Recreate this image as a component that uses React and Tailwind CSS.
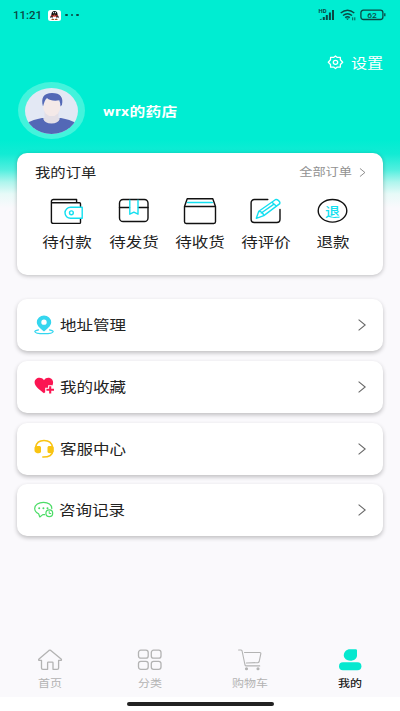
import React, { useState } from 'react';

const orders = [
  { key: 'pay', label: '待付款' },
  { key: 'ship', label: '待发货' },
  { key: 'receive', label: '待收货' },
  { key: 'review', label: '待评价' },
  { key: 'refund', label: '退款' }
];

const menus = [
  { key: 'address', label: '地址管理' },
  { key: 'favorite', label: '我的收藏' },
  { key: 'service', label: '客服中心' },
  { key: 'records', label: '咨询记录' }
];

const tabs = [
  { key: 'home', label: '首页' },
  { key: 'category', label: '分类' },
  { key: 'cart', label: '购物车' },
  { key: 'mine', label: '我的' }
];

const OrderIcon = ({ name }) => (
  <svg className="w-[34px] h-[28px]" viewBox="0 0 34 28" fill="none" stroke="#111" strokeWidth="1.4" strokeLinecap="round" strokeLinejoin="round">
    {name === 'pay' && (
      <>
        <path d="M30.5 9.5V6.8a1 1 0 0 0-1-1H1.4V4.500a2 2 0 0 1 2-2h23.2v3.300M1.400 4.500v19.900a2 2 0 0 0 2 2h26.1a1 1 0 0 0 1-1V22" />
        <path d="M32.2 10.3v11H20.5a5.500 5.500 0 0 1 0-11z" stroke="#12dff0" />
        <circle cx="21.400" cy="15.800" r="1.900" stroke="#12dff0" />
      </>
    )}
    {name === 'ship' && (
      <>
        <rect x="2.500" y="2.500" width="28.500" height="22" rx="3.600" />
        <path d="M2.500 10.500h10M21.400 10.500H31" />
        <path d="M12.800 3.200v14l4.100-2.100 4.100 2.100v-14" stroke="#12dff0" />
      </>
    )}
    {name === 'receive' && (
      <>
        <path d="M1.500 9.500h31v15.300a1.700 1.700 0 0 1-1.700 1.700H3.200a1.700 1.700 0 0 1-1.700-1.700zL4.200 1.800h25.600l2.700 7.700" />
        <path d="M4.600 5.500h24.600" stroke="#12dff0" strokeWidth="1.600" />
      </>
    )}
    {name === 'review' && (
      <>
        <path d="M18.800 2.500H5.300a3.200 3.200 0 0 0-3.200 3.200v16.600a3.200 3.200 0 0 0 3.200 3.200h22.500a3.200 3.200 0 0 0 3.200-3.200V12.500" />
        <path d="M7.300 21.300l2.500-7L26.300 2.700c1.800-.9 5.500 2 4.500 3.900L14.800 18.600zM9.800 14.300c2.500.2 4.300 1.800 5 4.300M23 5.200l4.500 4M12.300 16l12.300-8.600" stroke="#12dff0" />
      </>
    )}
    {name === 'refund' && (
      <>
        <ellipse cx="16.500" cy="13.800" rx="14.300" ry="11.300" />
        <text x="9" y="18.600" fontSize="13" fontWeight="500" fill="#12dff0" stroke="none" textLength="15" lengthAdjust="spacingAndGlyphs">退</text>
      </>
    )}
  </svg>
);

const MenuIcon = ({ name }) => (
  <svg className="w-[20px] h-[20px] shrink-0" viewBox="0 0 20 20" fill="none" strokeLinecap="round" strokeLinejoin="round">
    {name === 'address' && (
      <>
        <path fillRule="evenodd" fill="#34d6ef" d="M10 .4a7.200 6.800 0 0 1 7.200 6.800c0 3.900-4.900 7.300-7.200 9.300-2.300-2-7.200-5.400-7.200-9.300A7.200 6.800 0 0 1 10 .4zm0 4.200a2.700 2.600 0 1 0 0 5.200 2.700 2.600 0 1 0 0-5.200z" />
        <path stroke="#34d6ef" strokeWidth="1.200" d="M4.500 14.800c-2.200.5-3.800 1-3.700 1.800.3 1.300 4.600 2.100 9.200 2.100s8.900-.8 9.200-2.100c.1-.8-1.500-1.300-3.700-1.800" />
      </>
    )}
    {name === 'favorite' && (
      <>
        <path fill="#fb1552" d="M10 3.200C11.200 1.500 12.600.8 14.200.8c3 0 4.900 2.200 4.900 4.700 0 1.200-.3 2.200-.9 3.200l-.6.800L10 16.200C6.800 13.700.6 9.600.6 5.500.6 2.900 2.700.8 5.500.8c1.700 0 3.300.7 4.500 2.400z" />
        <path stroke="#fff" strokeWidth="4.200" strokeLinecap="butt" d="M16.200 8.200v9.300M11.200 12.800h9" />
        <path stroke="#fb1552" strokeWidth="2.100" strokeLinecap="butt" d="M16.200 9.300v7.200M12.400 12.800h7.600" />
      </>
    )}
    {name === 'service' && (
      <>
        <path stroke="#f9c412" strokeWidth="1.500" d="M1.600 8.200C2.300 4 5.500 1.500 10 1.500s7.900 2.500 8.600 6.700M18.800 12.300c-.4 3.800-3.400 5.700-10 5.600" />
        <path fill="#f9c412" d="M.5 8.400C1.300 7.300 3 6.900 5 7c1.400 0 2 .6 2 1.500v4.300c0 .9-.8 1.400-2.300 1.400-2.400 0-4.200-.9-4.200-2.800zM19.800 8.400c-.8-1.100-2.300-1.500-4.300-1.400-1.400 0-2 .6-2 1.500v4.300c0 .9.800 1.400 2.300 1.400 2.400 0 4-.9 4-2.800z" />
      </>
    )}
    {name === 'records' && (
      <>
        <path stroke="#4bdc66" strokeWidth="1.200" d="M17.800 8.600c.1-4-3.500-6.300-8.300-6.300C4.700 2.300.7 4.600.7 8.600c0 2.200 1.500 4.100 3.900 5.200l1.200 3.200 3-2.400 1.800.1" />
        <circle cx="15.300" cy="13.200" r="3.400" stroke="#4bdc66" strokeWidth="1.200" />
        <path stroke="#4bdc66" strokeWidth="1" d="M15.200 11.500v2h1.600" />
        <path stroke="#4bdc66" strokeWidth="2" d="M5.200 8.300h.01M9.400 8.300h.01M13.500 8.300h.01" />
      </>
    )}
  </svg>
);

const TabIcon = ({ name }) => (
  <svg className="w-[26px] h-[22px]" viewBox="0 0 26 22" fill="none" stroke="#b3b3b3" strokeWidth="1.300" strokeLinecap="round" strokeLinejoin="round">
    {name === 'home' && (
      <path d="M12 1.400q.9-.6 1.800 0l10.300 8.500c.7.700.4 1.500-.5 1.500h-2v7.500c0 .9-.6 1.400-1.400 1.400h-4.200v-6.500q0-.7-.7-.7h-4q-.7 0-.7.7v6.500H5.900c-.9 0-1.400-.5-1.400-1.400v-7.500h-2c-.9 0-1.200-.8-.5-1.500z" />
    )}
    {name === 'category' && (
      <>
        <rect x="1.500" y="1.200" width="9.700" height="8" rx="2.300" />
        <rect x="14.300" y="1.200" width="9.700" height="8" rx="2.300" />
        <rect x="1.500" y="12.300" width="9.700" height="8" rx="2.300" />
        <rect x="14.300" y="12.300" width="9.700" height="8" rx="2.300" />
      </>
    )}
    {name === 'cart' && (
      <>
        <path strokeWidth="1.100" d="M1.600 1h2.100c.7 0 1.200.3 1.400 1L8 16c.2.600.6.900 1.200.9h13.500M7.500 3.500h15.200c.9 0 1.300.5 1.100 1.300l-1.600 7.700c-.2.700-.6 1-1.300 1.100l-11.600.4" />
        <circle cx="9.500" cy="19.800" r=".9" fill="#b3b3b3" />
        <circle cx="21" cy="19.800" r=".9" fill="#b3b3b3" />
      </>
    )}
    {name === 'mine' && (
      <g fill="#06e8cf" stroke="none">
        <path d="M13 .3h5.800a1.200 1.200 0 0 1 1.200 1.200v4.700c0 3.300-3 5.500-6.700 5.500-3.500 0-6.500-2.200-6.500-5.400C6.800 3 9.500.3 13 .3z" />
        <rect x="2" y="13.200" width="22.400" height="8" rx="4" />
      </g>
    )}
  </svg>
);

const Arrow = ({ className, color }) => (
  <svg className={className} viewBox="0 0 8 12" fill="none" stroke={color} strokeWidth="1.100">
    <path d="M.6.6L7.200 6 .6 11.400" />
  </svg>
);

const StatusBar = () => (
  <div className="h-[30px] pl-[13px] pr-[14px] flex items-center justify-between text-[#0a4844]">
    <div className="flex items-center">
      <span className="inline-block w-[29px] text-[11px] leading-none font-medium origin-left scale-x-[1.04]">11:21</span>
      <svg className="ml-[6px] w-[13px] h-[11px]" viewBox="0 0 13 11">
        <rect width="13" height="11" rx="2.500" fill="#fff" />
        <ellipse cx="6.500" cy="5" rx="3.100" ry="4" fill="#111" />
        <path d="M3.400 4.500L1.900 7.800l2-.5zM9.600 4.500l1.500 3.300-2-.5z" fill="#111" />
        <ellipse cx="6.500" cy="7.300" rx="1.900" ry="1.900" fill="#fff" />
        <path d="M3.400 5q3.100 1.300 6.200 0v1.100q-3.100 1.300-6.200 0z" fill="#ed2b20" />
        <path d="M5.200 3.900h2.600L6.500 4.800zM3.500 9.100h2.600v.8H3.500zM6.900 9.100h2.600v.8H6.900z" fill="#a5551d" />
        <circle cx="5.600" cy="2.700" r=".6" fill="#fff" />
        <circle cx="7.400" cy="2.700" r=".6" fill="#fff" />
      </svg>
      <div className="ml-[4px] flex gap-[3px]">
        <i className="w-[2.500px] h-[2.500px] rounded-full bg-[#0a4844]" />
        <i className="w-[2.500px] h-[2.500px] rounded-full bg-[#0a4844]" />
        <i className="w-[2.500px] h-[2.500px] rounded-full bg-[#0a4844]" />
      </div>
    </div>
    <div className="flex items-center">
      <svg className="w-[17px] h-[12px]" viewBox="0 0 17 12" fill="currentColor">
        <text x=".6" y="4.400" fontSize="5.500" fontWeight="700" textLength="8" lengthAdjust="spacingAndGlyphs">HD</text>
        <path d="M1.500 11l2-1.600V11zM4.800 8h2v3h-2zM7.800 6h2v5h-2zM10.900 3.500h2V11h-2zM14 1h2v10h-2z" />
      </svg>
      <svg className="ml-[5px] w-[16px] h-[12px]" viewBox="0 0 16 12" fill="none" stroke="currentColor" strokeWidth="1.500">
        <path d="M.7 4q6.800-5.400 13.600 0M3 6.500q4.500-3.600 9 0M5.200 8.700q2.300-1.900 4.600 0" />
        <path d="M6 9.400h3L7.500 11z" fill="currentColor" stroke="none" />
        <path d="M12.700 8.300v3M14.800 8.300v3" strokeWidth=".9" />
      </svg>
      <svg className="ml-[4px] w-[26px] h-[12px]" viewBox="0 0 26 12" fill="none" stroke="currentColor">
        <rect x=".9" y="1.200" width="22" height="9.300" rx="2.500" strokeWidth="1.300" />
        <path d="M24.800 4.200v3" strokeWidth="1.300" />
        <text x="7.200" y="8.700" fontSize="8" fontWeight="500" fill="currentColor" stroke="none" textLength="9.500" lengthAdjust="spacingAndGlyphs">62</text>
      </svg>
    </div>
  </div>
);

const Avatar = () => (
  <div className="w-[67px] h-[57px] rounded-[50%] bg-[#43f3dc] flex items-center justify-center">
    <svg className="w-[53px] h-[46px]" viewBox="0 0 53 46">
      <defs>
        <clipPath id="face">
          <ellipse cx="26.500" cy="23" rx="26.500" ry="23" />
        </clipPath>
      </defs>
      <g clipPath="url(#face)">
        <rect width="53" height="46" fill="#e3e8f4" />
        <path d="M2 35q6-3.500 15-5h19q9 1.500 15 5v12H2z" fill="#5368b6" />
        <path d="M19.500 23h14v7l1.500.4q-1.800 5-8.500 5t-8.500-5l1.500-.4z" fill="#e3dfe6" />
        <ellipse cx="26.800" cy="18.800" rx="8.600" ry="9.300" fill="#f4e9e8" />
        <path d="M18 18.500C15.700 10 18.600 5 27 5c8.500 0 11.700 4.500 9.900 12l-1.400 1.500q-.2-4-1.200-6.200c-4.300.9-10 .3-12.300-2.300-2.200 2-2.800 4.500-4 8.500z" fill="#5368b6" />
      </g>
    </svg>
  </div>
);

const App = () => {
  const [active, setActive] = useState('mine');

  return (
    <div className="w-[400px] h-[711px] overflow-hidden flex flex-col bg-[#faf9fc] bg-[linear-gradient(to_bottom,#00edd2_0px,#00edd2_140px,#12ebd4_154px,#53efdf_170px,#aef5ed_182px,#e7faf8_194px,#faf9fc_208px)] bg-no-repeat text-[#222] font-['Roboto','Noto_Sans_CJK_SC',sans-serif]">
      <StatusBar />

      <header className="h-[123px] shrink-0 text-white">
        <div className="h-[52px] pt-[23px] pl-[327px] flex items-start">
          <svg className="w-[17px] h-[15px] mt-[2px]" viewBox="0 0 17 15" fill="none" stroke="#fff" strokeWidth="1.300" strokeLinejoin="round">
            <path d="M8.500 1l1.800 1.400 3-.1.100 2.500 2.300 2.400-2.300 2.300-.1 2.700-3-.1-1.800 1.500-1.900-1.500-3 .1-.1-2.700-2.200-2.300 2.200-2.400.1-2.500 3 .1z" />
            <ellipse cx="8.500" cy="7.300" rx="2.200" ry="2" />
          </svg>
          <span className="ml-[7px] text-[14px] leading-[20px] origin-left scale-x-[1.15] whitespace-nowrap">设置</span>
        </div>
        <div className="pl-[18px] flex items-center">
          <Avatar />
          <span className="ml-[18px] mt-[2px] text-[13px] leading-[20px] font-bold tracking-[0.300px] origin-left scale-x-[1.21] whitespace-nowrap">wrx的药店</span>
        </div>
      </header>

      <section className="mx-[17px] h-[122px] shrink-0 rounded-[10px] bg-white shadow-[0_1px_4px_rgba(0,0,0,0.25)]">
        <div className="h-[41px] pl-[18px] pr-[17px] flex items-center justify-between">
          <span className="-mt-[2px] text-[13px] leading-[20px] origin-left scale-x-[1.18]">我的订单</span>
          <div className="-mt-[2px] flex items-center text-[#929292]">
            <span className="text-[11px] leading-[16px] origin-right scale-x-[1.2]">全部订单</span>
            <Arrow className="ml-[7px] -mt-px w-[7px] h-[9px]" color="#777" />
          </div>
        </div>
        <div className="px-[17px] grid grid-cols-5">
          {orders.map(item => (
            <div key={item.key} className="pt-[3px] flex flex-col items-center">
              <OrderIcon name={item.key} />
              <span className="mt-[7px] text-[14px] leading-[20px] scale-x-[1.18] whitespace-nowrap">{item.label}</span>
            </div>
          ))}
        </div>
      </section>

      <section className="mx-[17px] mt-[24px] flex flex-col gap-[9.800px]">
        {menus.map(item => (
          <div key={item.key} className="h-[52px] pl-[17px] pr-[17px] rounded-[10px] bg-white shadow-[0_2px_4px_rgba(0,0,0,0.24)] flex items-center">
            <MenuIcon name={item.key} />
            <span className={`${item.key === 'records' ? 'ml-[5px]' : 'ml-[6px]'} text-[14px] leading-[20px] origin-left scale-x-[1.18]`}>{item.label}</span>
            <Arrow className="ml-auto w-[8px] h-[12px]" color="#666" />
          </div>
        ))}
      </section>

      <nav className="mt-auto h-[49px] shrink-0 grid grid-cols-4">
        {tabs.map(tab => (
          <button key={tab.key} onClick={() => setActive(tab.key)} className="pt-[1px] h-[49px] flex flex-col items-center justify-start">
            <TabIcon name={tab.key} />
            <span className={`mt-[6px] text-[10px] leading-[14px] scale-x-[1.2] ${active === tab.key ? 'text-[#222] font-medium' : 'text-[#b3b3b3]'}`}>
              {tab.label}
            </span>
          </button>
        ))}
      </nav>
      <div className="h-[14px] shrink-0 bg-white flex justify-center">
        <div className="mt-[5px] w-[147px] h-[4px] rounded-full bg-[#222]" />
      </div>
    </div>
  );
};

export default App;
